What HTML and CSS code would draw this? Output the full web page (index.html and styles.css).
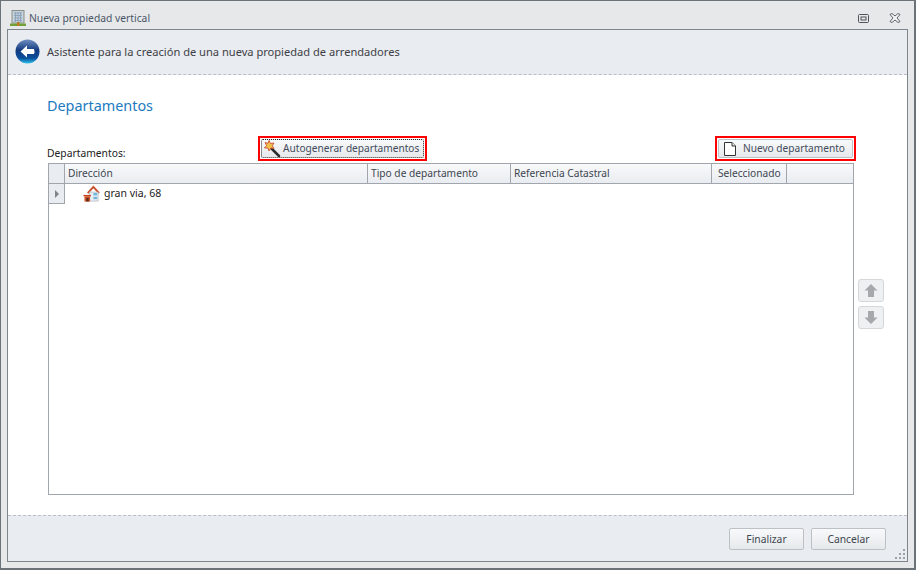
FILE: index.html
```html
<!DOCTYPE html>
<html lang="es">
<head>
<meta charset="utf-8">
<title>Nueva propiedad vertical</title>
<link rel="stylesheet" href="styles.css">
</head>
<body>
<div class="window">
  <div class="titlebar">
    <svg class="app-icon" width="18" height="18" viewBox="0 0 18 18">
      <rect x="3" y="1.500" width="12" height="12.500" fill="#c5d3de" stroke="#8a8f86"/>
      <path d="M5 4h8M5 6.500h8M5 9h8M5 11.500h8M6.500 3v10M9 3v10M11.500 3v10" stroke="#8fa4b8" stroke-width="1"/>
      <rect x="1" y="14.500" width="16" height="2.500" fill="#74a03a"/>
      <rect x="8" y="13" width="2.500" height="4" fill="#b97a24"/>
    </svg>
    <span class="title-text">Nueva propiedad vertical</span>
    <svg class="win-btn restore" width="11" height="9" viewBox="0 0 11 9">
      <rect x="0.500" y="0.500" width="10" height="8" rx="1" fill="none" stroke="#4e5458"/>
      <rect x="3" y="3" width="5" height="3" fill="none" stroke="#4e5458"/>
    </svg>
    <svg class="win-btn close" width="12" height="10" viewBox="0 0 12 10">
      <path d="M1 1.500 L3 0.500 L6 3 L9 0.500 L11 1.500 L8 5 L11 8.500 L9 9.500 L6 7 L3 9.500 L1 8.500 L4 5 Z" fill="#f3f4f5" stroke="#4e5458" stroke-width="0.900"/>
    </svg>
  </div>
  <div class="frame">
    <div class="head">
      <svg class="back" width="25" height="25" viewBox="0 0 25 25">
        <defs>
          <linearGradient id="bg" x1="0" y1="0" x2="0" y2="1">
            <stop offset="0" stop-color="#6f8fc0"/>
            <stop offset="0.450" stop-color="#123a80"/>
            <stop offset="0.780" stop-color="#0a4f9c"/>
            <stop offset="1" stop-color="#30c4ee"/>
          </linearGradient>
        </defs>
        <circle cx="12.500" cy="12.500" r="12" fill="url(#bg)"/>
        <path d="M5.500 12.500 L12 6.500 V10 H19 Q20 12.500 19 15 H12 V18.500 Z" fill="#fff"/>
      </svg>
      <span class="head-text">Asistente para la creación de una nueva propiedad de arrendadores</span>
    </div>
    <div class="body">
      <h1 class="section">Departamentos</h1>
      <div class="toolbar">
        <span class="label">Departamentos:</span>
        <div class="mark mark-auto">
          <button class="btn btn-auto">
            <svg width="18" height="18" viewBox="0 0 18 18">
              <path d="M7 7 L16 16" stroke="#2d2d2d" stroke-width="2.500" stroke-linecap="round"/>
              <path d="M6 0.500 L7.500 3.500 L11 3 L9.300 5.800 L11 8.500 L7.800 8 L6 11 L4.800 8 L1.500 8 L3.500 5.500 L2 2.500 L5 3.300 Z" fill="#f2c14a" stroke="#c9503a" stroke-width="0.900"/>
            </svg>
            <span>Autogenerar departamentos</span>
          </button>
        </div>
        <div class="mark mark-new">
          <button class="btn btn-new">
            <svg width="12" height="14" viewBox="0 0 12 14">
              <path d="M0.500 0.500 H8 L11.500 4 V13.500 H0.500 Z" fill="#fff" stroke="#333"/>
              <path d="M8 0.500 V4 H11.500" fill="#eee" stroke="#333"/>
            </svg>
            <span>Nuevo departamento</span>
          </button>
        </div>
      </div>
      <div class="content">
        <div class="grid">
          <div class="grid-head">
            <div class="cell c-ind"></div>
            <div class="cell c-dir">Dirección</div>
            <div class="cell c-tipo">Tipo de departamento</div>
            <div class="cell c-ref">Referencia Catastral</div>
            <div class="cell c-sel">Seleccionado</div>
          </div>
          <div class="grid-row">
            <div class="row-ind"><span class="tri"></span></div>
            <svg class="house" width="17" height="17" viewBox="0 0 18 17">
              <path d="M5 8 L11 1.500 L17 8" fill="none" stroke="#c8502a" stroke-width="2"/>
              <rect x="7" y="7" width="9" height="9.500" fill="#e9eef2" stroke="#a9b4bc" stroke-width="0.700"/>
              <rect x="11" y="8" width="4" height="2.500" fill="#6fb6dc"/>
              <rect x="11" y="12" width="4" height="2.500" fill="#6fb6dc"/>
              <path d="M0.500 10 H8.500 V11.500 H0.500 Z" fill="#c8401f"/>
              <rect x="1.500" y="11.500" width="6" height="5.500" fill="#d0542c"/>
              <rect x="3.500" y="13" width="2.500" height="4" fill="#5a2a1a"/>
            </svg>
            <span class="row-text">gran via, 68</span>
          </div>
        </div>
        <div class="side">
          <button class="arrow">
            <svg width="14" height="15" viewBox="0 0 14 15"><path d="M7 1 L13.500 7.500 H10 V14 H4 V7.500 H0.500 Z" fill="#a6a9ab"/></svg>
          </button>
          <button class="arrow">
            <svg width="14" height="15" viewBox="0 0 14 15"><path d="M7 14 L13.500 7.500 H10 V1 H4 V7.500 H0.500 Z" fill="#a6a9ab"/></svg>
          </button>
        </div>
      </div>
    </div>
    <div class="foot">
      <button class="btn foot-btn">Finalizar</button>
      <button class="btn foot-btn">Cancelar</button>
      <svg class="grip" width="11" height="11" viewBox="0 0 11 11">
        <path d="M8 0h2v2H8zM4 4h2v2H4zM8 4h2v2H8zM0 8h2v2H0zM4 8h2v2H4zM8 8h2v2H8z" fill="#9ba2a8"/>
      </svg>
    </div>
  </div>
</div>
</body>
</html>
```
FILE: styles.css
```css
* { box-sizing: border-box; }
html, body { margin: 0; padding: 0; }
body { width: 916px; height: 570px; overflow: hidden; font-family: "Noto Sans", "Open Sans", sans-serif; font-size: 10.300px; color: #3b3b3b; }
.window { width: 916px; height: 570px; border: 2px solid #6b7378; border-width: 1px 2px 2px 1px; background: #e6e8ea; padding: 0 6px 6px 6px; display: flex; flex-direction: column; }
.titlebar { height: 28px; display: flex; align-items: center; padding-left: 2px; flex: none; }
.app-icon { flex: none; margin-top: 6px; }
.title-text { margin-left: 2px; color: #4a5568; font-size: 10.300px; flex: 1; margin-top: 5px; }
.win-btn { flex: none; margin-top: 6px; }
.restore { margin-right: 20px; }
.close { margin-right: 7px; }
.frame { flex: 1; min-height: 0; border: 1px solid #7f868b; display: flex; flex-direction: column; background: #fff; }
.head { height: 45px; flex: none; background: #e9ecf0; border-bottom: 1px dashed #b9bec4; display: flex; align-items: center; padding-left: 7px; }
.back { flex: none; margin-top: -1px; }
.head-text { margin-left: 7px; margin-top: -2px; font-size: 11.100px; color: #3e3e46; }
.body { flex: 1; min-height: 0; padding: 21px 22px 20px 39px; display: flex; flex-direction: column; background: #fff; }
.section { margin: 0 0 20px 0; font-size: 14.400px; font-weight: 400; color: #1c7ac0; line-height: 20px; height: 20px; }
.toolbar { height: 27px; display: flex; align-items: flex-start; flex: none; }
.label { width: 211px; margin-top: 10px; font-size: 10.300px; line-height: 15px; color: #222; white-space: nowrap; }
.mark { border: 2px solid #f00; height: 25px; padding: 1px; display: flex; flex: none; }
.mark-auto { width: 169px; }
.mark-new { width: 141px; margin-left: 288px; }
.btn { font: inherit; color: #444c5c; border: 1px solid #bcc1c6; border-radius: 2px; background: linear-gradient(#f8f9fa, #e6e9ec); padding: 0; white-space: nowrap; }
.mark .btn { width: 100%; height: 100%; display: flex; align-items: center; font-size: 10.150px; }
.btn-auto { border: 1px dotted #222 !important; padding-left: 1px !important; }
.btn-auto span { margin-left: 2px; margin-top: -2px; }
.btn-new { padding-left: 5px !important; }
.btn-new span { margin-left: 7px; margin-top: -2px; }
.content { flex: 1; min-height: 0; display: flex; }
.grid { width: 806px; margin-left: 1px; border: 1px solid #a0a6ac; background: #fff; flex: none; }
.grid-head { height: 20px; display: flex; border-bottom: 1px solid #a0a6ac; background: linear-gradient(#f8f9fb, #e9ecf0); }
.cell { border-right: 1px solid #a0a6ac; height: 19px; line-height: 18px; padding-left: 3px; font-size: 10.200px; color: #3e4650; flex: none; white-space: nowrap; }
.c-ind { width: 16px; padding: 0; background: #e9ecf0; }
.c-dir { width: 303px; }
.c-tipo { width: 143px; }
.c-ref { width: 201px; }
.c-sel { width: 75px; padding-left: 6px; }
.grid-row { height: 20px; display: flex; align-items: center; }
.row-ind { width: 16px; height: 20px; background: #e9ecf0; border-right: 1px solid #a0a6ac; border-bottom: 1px solid #a0a6ac; display: flex; align-items: center; justify-content: center; flex: none; }
.tri { width: 0; height: 0; border-left: 4px solid #7d848a; border-top: 4px solid transparent; border-bottom: 4px solid transparent; }
.house { flex: none; margin-left: 18px; margin-top: -2px; }
.row-text { margin-left: 4px; margin-top: -2px; font-size: 10.500px; color: #222; }
.side { flex: none; margin-left: 4px; padding-top: 116px; display: flex; flex-direction: column; gap: 4px; }
.arrow { width: 26px; height: 23px; padding: 0; border: 1px solid #d5d8db; border-radius: 3px; background: #eef0f2; display: flex; align-items: center; justify-content: center; }
.foot { height: 46px; flex: none; background: #e9ecf0; border-top: 1px dashed #b9bec4; display: flex; justify-content: flex-end; align-items: flex-start; gap: 7px; padding: 12px 21px 0 0; position: relative; }
.foot-btn { width: 75px; height: 22px; font-size: 10.300px; color: #3e4650; }
.grip { position: absolute; right: 1px; bottom: 1px; }
```
